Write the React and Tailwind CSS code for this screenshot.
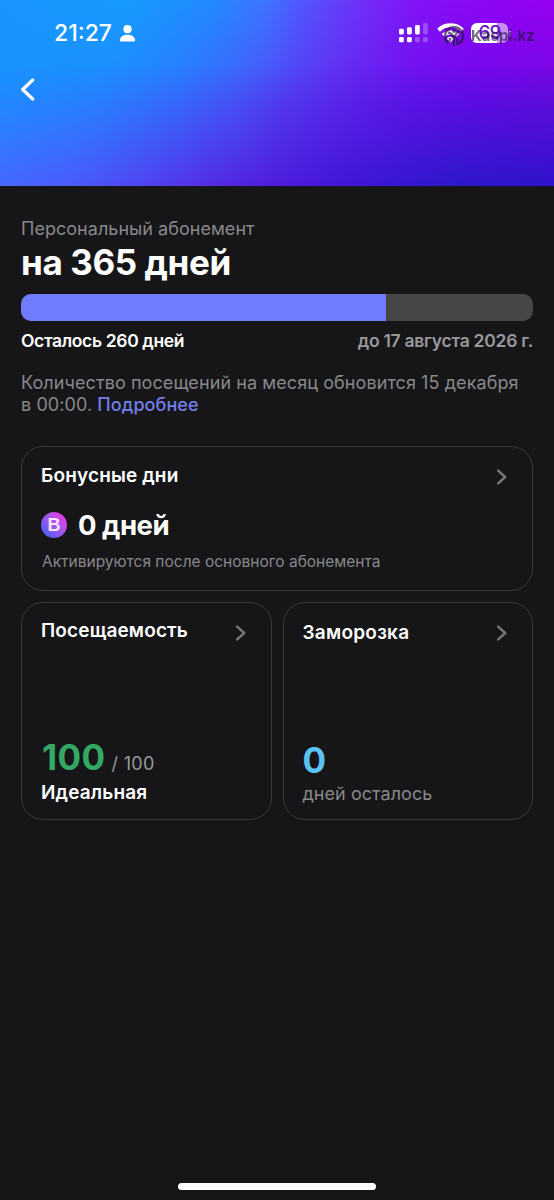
import React from 'react';

const TOTAL_DAYS = 365;
const DAYS_LEFT = 260;

const Chevron = ({ className }) => (
  <svg className={className} width="12" height="18" viewBox="0 0 12 18" fill="none">
    <path d="M2.2 2.6 9.2 9l-7 6.4" stroke="#747477" strokeWidth="2.6" strokeLinecap="round" strokeLinejoin="round" />
  </svg>
);

const Signal = () => (
  <svg width="29" height="20" viewBox="0 0 29 20" fill="#fff">
    <rect x="0" y="5.8" width="4.8" height="5.6" rx="1.4" />
    <rect x="8" y="4.3" width="4.8" height="7.1" rx="1.4" />
    <rect x="16" y="2" width="4.8" height="9.4" rx="1.4" />
    <rect x="24" y="0" width="4.8" height="11.4" rx="1.4" opacity="0.25" />
    <rect x="0" y="14" width="4.8" height="5.3" rx="1.4" />
    <rect x="8" y="14" width="4.8" height="5.3" rx="1.4" />
    <rect x="16" y="14" width="4.8" height="5.3" rx="1.4" opacity="0.25" />
    <rect x="24" y="14" width="4.8" height="5.3" rx="1.4" opacity="0.25" />
  </svg>
);

const Wifi = () => (
  <svg width="27" height="20" viewBox="0 0 27 20" fill="none" stroke="#fff" strokeWidth="4">
    <path d="M1.6 7.2a17 17 0 0 1 23.8 0" />
    <path d="M6.2 12.4a10.400 10.400 0 0 1 14.600 0" />
    <path d="M13.5 19.4 9.6 15.400a5.600 5.600 0 0 1 7.800 0Z" fill="#fff" stroke="none" />
  </svg>
);

const Watermark = () => (
  <div className="absolute top-[25px] left-[443px] flex items-center gap-[6px] opacity-65">
    <svg width="22" height="22" viewBox="0 0 22 22" fill="none" stroke="#23163f">
      <circle cx="11" cy="11" r="9" strokeWidth="2.6" strokeDasharray="45 11.5" strokeDashoffset="-20" />
      <path d="M5 7.5c3 .6 4.8 2.2 5.2 5.5M16.5 6c-3 1.5-4.5 4-4.5 7.5M10.8 10v11M14.3 13v7M7 13v3.5" strokeWidth="2.4" />
      <circle cx="11" cy="6" r="2" fill="#23163f" stroke="none" />
    </svg>
    <span className="text-[15px] leading-[22px] font-bold text-[#23163f]">Kaspi.kz</span>
  </div>
);

const Header = () => (
  <header className="relative h-[186px] overflow-hidden bg-[linear-gradient(90deg,#1694ff_0px,#1e8cff_100px,#2f76ff_180px,#455cfa_240px,#553ef4_290px,#6226ef_345px,#6812ec_410px,#6a0ae8_480px,#6a0ce0_554px)]">
    <div className="absolute inset-0 bg-[linear-gradient(90deg,#1a94ff_0px,#169bff_130px,#2489ff_215px,#3f74ff_268px,#5058fe_300px,#6440fa_337px,#7628f9_375px,#8412f6_420px,#8e06f4_490px,#9800f0_554px)] [mask-image:linear-gradient(180deg,#000_0%,transparent_60%)]" />
    <div className="absolute inset-0 bg-[linear-gradient(90deg,#4668ff_0px,#4b5cfc_70px,#5046f2_140px,#5430e8_200px,#4f1cdc_277px,#4016d8_350px,#2e18cc_450px,#3012cc_554px)] [mask-image:linear-gradient(180deg,transparent_35%,rgba(0,0,0,0.35)_62%,#000_100%)]" />

    <div className="relative flex items-start pt-[23px] pl-[54px]">
      <span className="w-[66px] text-[23px] leading-[21px] font-medium text-white">21:27</span>
      <svg className="mt-[2px]" width="15" height="17" viewBox="0 0 15 17" fill="#fff">
        <circle cx="7.5" cy="4.2" r="4.1" />
        <path d="M0 15.2C0 11.8 3 9.7 7.5 9.7S15 11.8 15 15.2c0 1-.5 1.4-1.4 1.4H1.4C.5 16.6 0 16.2 0 15.2Z" />
      </svg>
      <div className="ml-[264px] flex items-start">
        <Signal />
        <div className="ml-[9px]"><Wifi /></div>
        <div className="ml-[7px] flex h-5 w-[37px] items-center justify-center rounded-[6px] bg-[linear-gradient(90deg,#fff_69%,#c98cfa_69%)] text-[19px] leading-5 font-medium tracking-[-1px] text-[#6312c4]">69</div>
        <div className="mt-[7px] ml-px h-[7px] w-[2px] rounded-r-full bg-[#c98cfa]" />
      </div>
    </div>

    <button className="relative mt-[34px] ml-5 block">
      <svg width="15" height="23" viewBox="0 0 15 23" fill="none">
        <path d="M12.7 2 2.7 11.5l10 9.5" stroke="#fff" strokeWidth="3.2" strokeLinecap="round" strokeLinejoin="round" />
      </svg>
    </button>
    <Watermark />
  </header>
);

const App = () => (
  <div className="flex h-[1200px] w-[554px] flex-col bg-[#161618] font-['Inter',sans-serif] text-white">
    <Header />

    <main className="flex-1 px-[21px] pt-[33px]">
      <p className="text-[18px] leading-5 tracking-[0.03px] text-[#88888b]">Персональный абонемент</p>
      <h1 className="mt-[3px] text-[35px] leading-10 font-bold tracking-[-0.4px]">на 365 дней</h1>

      <div className="mt-3 h-[27px] overflow-hidden rounded-[10px] bg-[#474749]">
        <div className="h-full bg-[#6f7cfd]" style={{ width: `${(DAYS_LEFT / TOTAL_DAYS) * 100}%` }} />
      </div>
      <div className="mt-[10px] flex justify-between text-[17.5px] leading-5 font-semibold tracking-[-0.36px]">
        <span>Осталось {DAYS_LEFT} дней</span>
        <span className="tracking-[-0.27px] text-[#98989b]">до 17 августа 2026 г.</span>
      </div>

      <p className="mt-[21px] text-[18px] leading-[22px] tracking-[0.08px] text-[#88888b]">
        Количество посещений на месяц обновится 15 декабря
        <br />
        в 00:00. <a className="font-medium text-[#747ee8]">Подробнее</a>
      </p>

      {/* Bonus days */}
      <section className="mt-[30px] h-[145px] rounded-[22px] border border-[#39393b] px-[19px] pt-[17px]">
        <div className="flex justify-between">
          <h2 className="mt-px text-[19px] leading-[22px] font-semibold tracking-[0.15px]">Бонусные дни</h2>
          <Chevron className="mt-[4px] mr-[5px]" />
        </div>
        <div className="mt-[21px] flex items-center gap-[11px]">
          <span className="flex size-[26px] items-center justify-center rounded-full bg-linear-to-tr from-[#5a5cf4] from-20% to-[#e03ce0] to-85% font-['Liberation_Sans',sans-serif] text-[18px] leading-[26px] font-bold text-[#fbe4ff]">B</span>
          <span className="text-[27.5px] leading-[34px] font-bold tracking-[-0.5px]">0 дней</span>
        </div>
        <p className="mt-[10px] ml-px text-[15.5px] leading-5 text-[#88888b]">Активируются после основного абонемента</p>
      </section>

      <div className="mt-[11px] grid grid-cols-2 gap-[11px]">
        {/* Attendance */}
        <section className="flex h-[218px] flex-col rounded-[22px] border border-[#39393b] px-[19px] pt-[17px] pb-[15px]">
          <div className="flex justify-between">
            <h2 className="text-[19px] leading-[22px] font-semibold tracking-[0.15px]">Посещаемость</h2>
            <Chevron className="mt-[4px] mr-[5px]" />
          </div>
          <div className="mt-auto ml-px flex items-baseline gap-[6px]">
            <span className="text-[35px] leading-10 font-bold tracking-[0.4px] text-[#33a963]">100</span>
            <span className="text-[18px] tracking-[0.3px] text-[#98989b]">/ 100</span>
          </div>
          <p className="mt-[5px] text-[19px] leading-[22px] font-semibold tracking-[0.15px]">Идеальная</p>
        </section>

        {/* Freeze */}
        <section className="flex h-[218px] flex-col rounded-[22px] border border-[#39393b] px-[19px] pt-[19px] pb-[14px]">
          <div className="flex justify-between">
            <h2 className="text-[19px] leading-[22px] font-semibold tracking-[0.25px]">Заморозка</h2>
            <Chevron className="mt-[2px] mr-[5px]" />
          </div>
          <span className="mt-auto text-[35px] leading-10 font-bold text-[#5cc4f4]">0</span>
          <p className="mt-[3px] text-[18px] leading-[22px] tracking-[0.05px] text-[#88888b]">дней осталось</p>
        </section>
      </div>
    </main>

    <div className="mb-[10px] h-[7px] w-[198px] self-center rounded-full bg-white" />
  </div>
);

export default App;
